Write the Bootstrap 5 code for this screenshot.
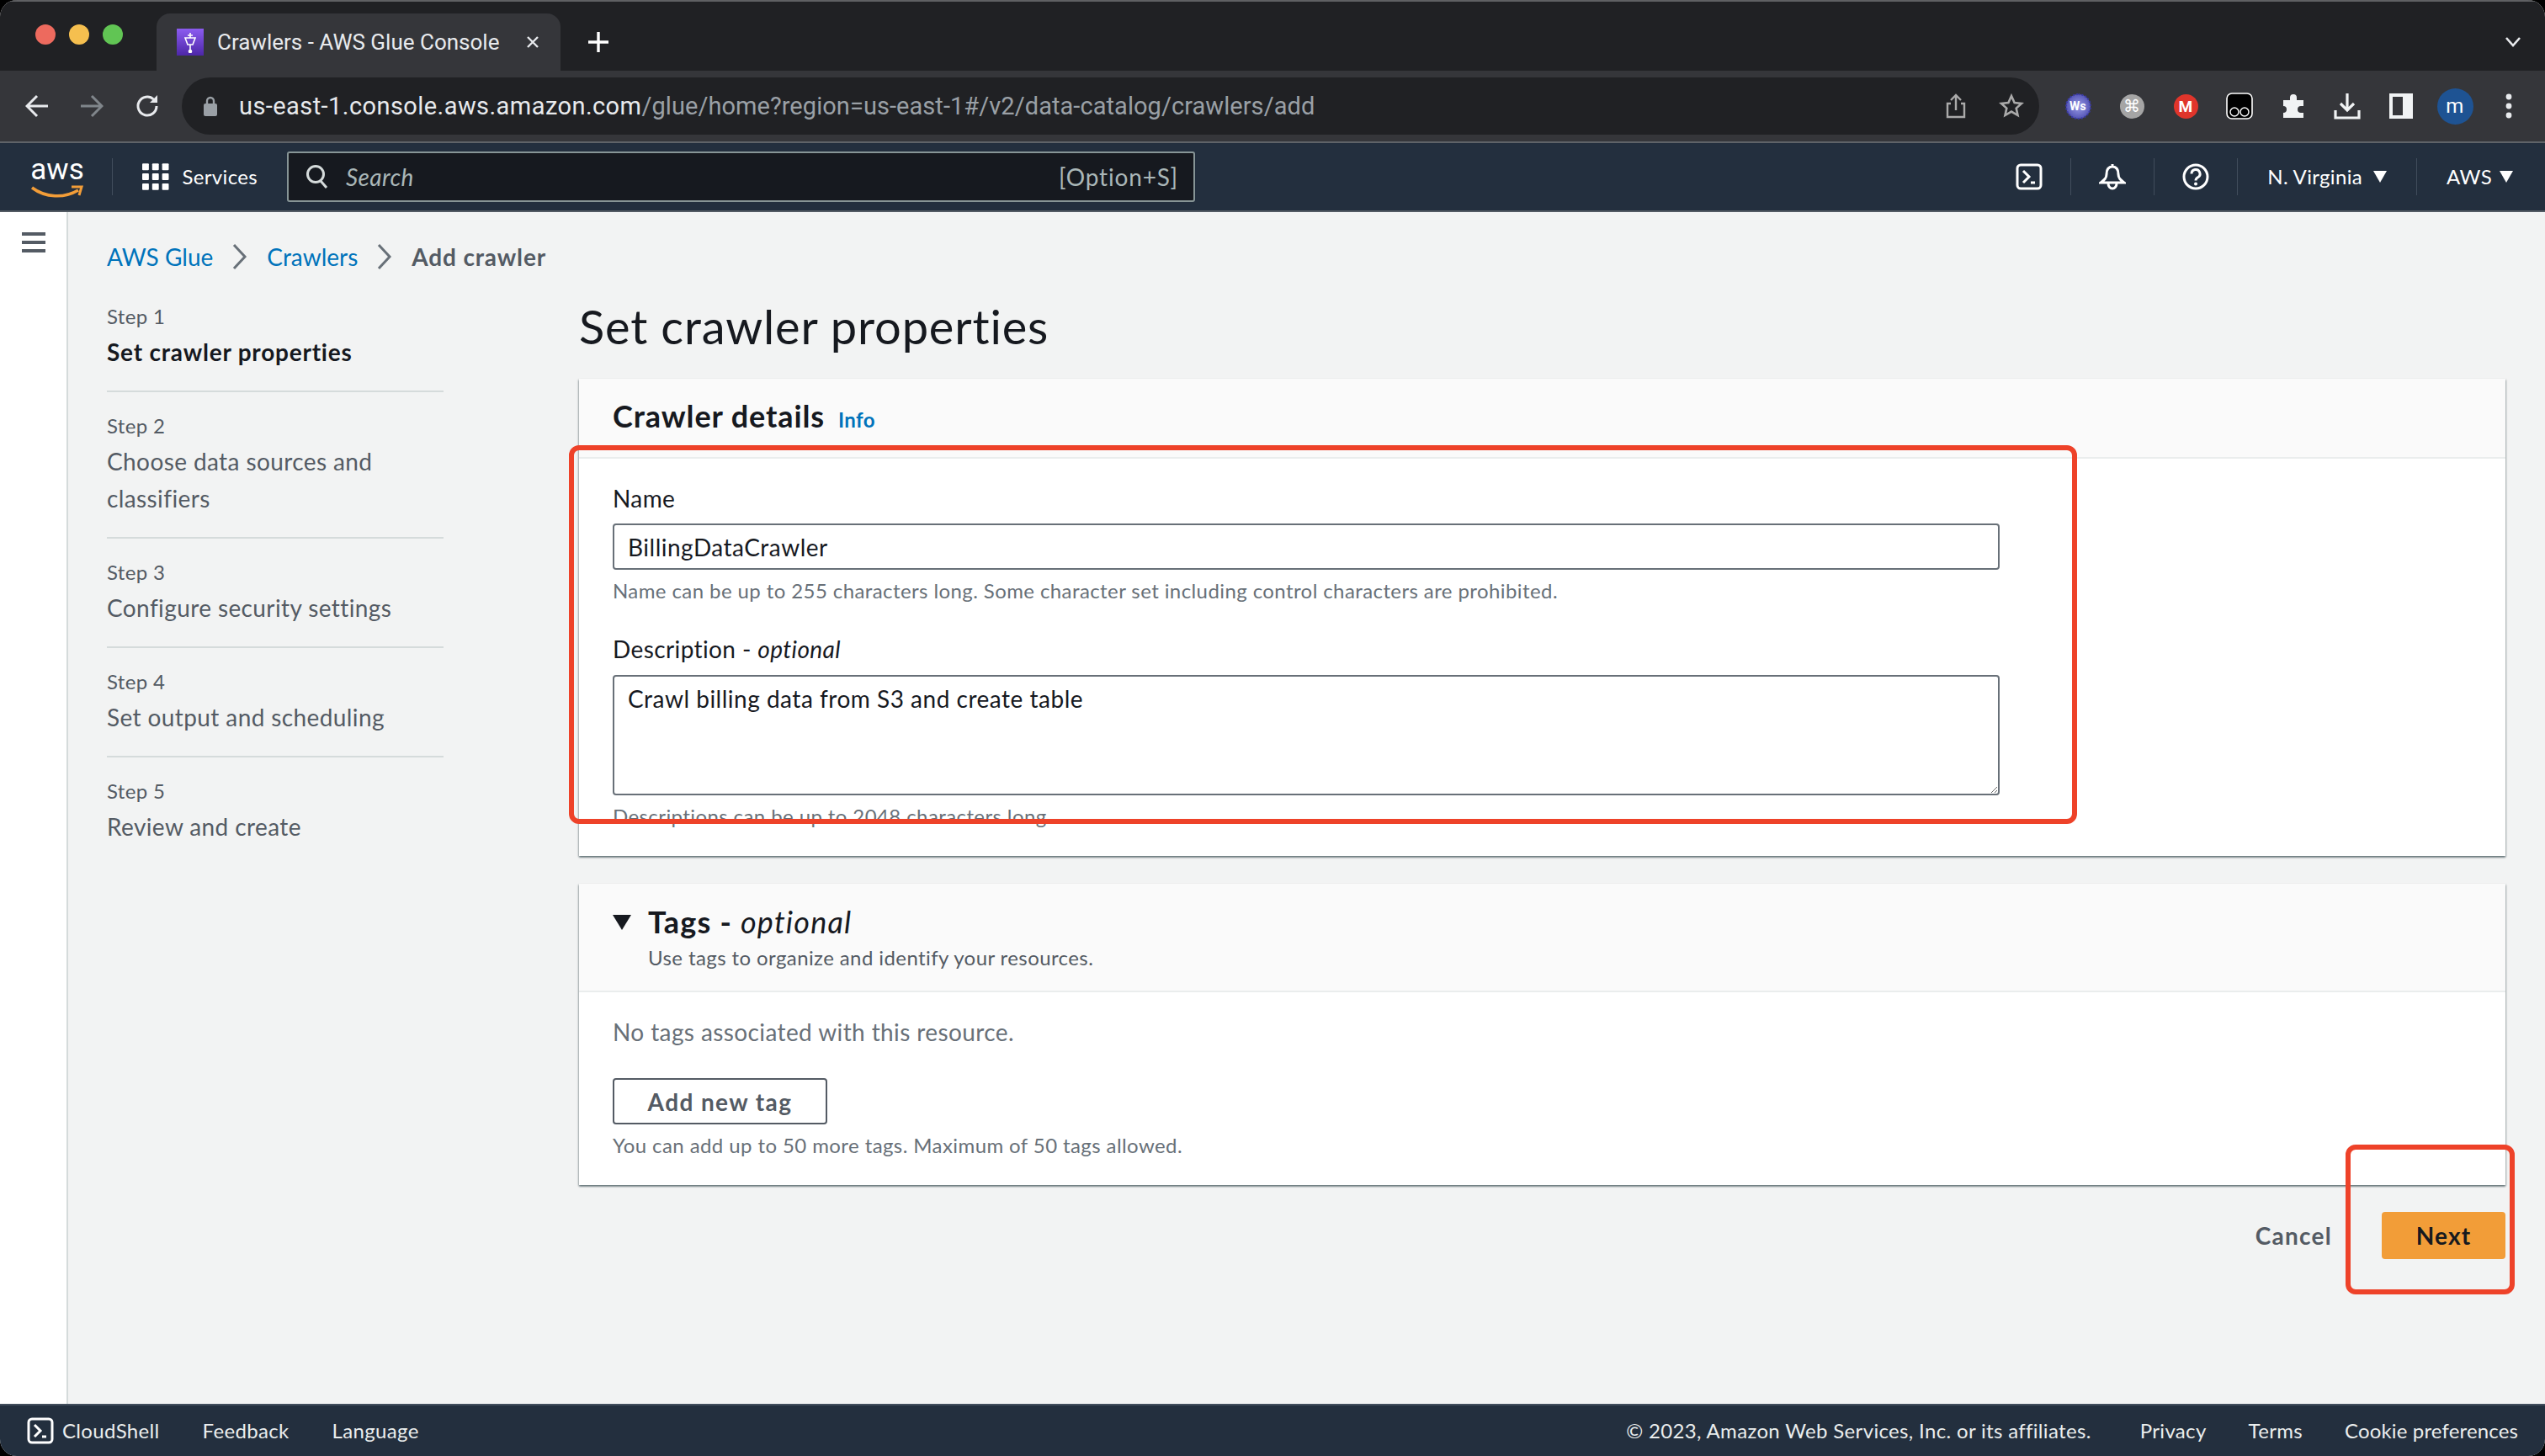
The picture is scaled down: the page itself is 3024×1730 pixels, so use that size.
<!doctype html>
<html lang="en">
<head>
    <meta charset="utf-8">
    <title>Crawlers - AWS Glue Console</title>
    <link href="https://cdn.jsdelivr.net/npm/bootstrap@5.3.3/dist/css/bootstrap.min.css" rel="stylesheet">
    <style>
        html, body { height: 100%; }
        body { background: #000; overflow: hidden; font-family: "Lato", "Liberation Sans", sans-serif; color: #16191f; }
        .app-window { position: relative; height: 1730px; border-radius: 20px; overflow: hidden; background: #f2f3f3; }
        .app-window * { letter-spacing: .014em; }

        .tab-strip { height: 84px; background: #202124; border-top: 2px solid #5f6063; padding-left: 42px; }
        .traffic { width: 24px; height: 24px; border-radius: 50%; }
        .traffic-red { background: #ed6a5e; }
        .traffic-yellow { background: #f5bf4f; }
        .traffic-green { background: #61c554; }
        .browser-tab { width: 480px; height: 68px; margin-left: 40px; margin-top: 14px; padding: 0 24px; background: #35363a; border-radius: 16px 16px 0 0; color: #e8eaed; font: 26px "Roboto", sans-serif; }
        .app-window .browser-tab span { letter-spacing: 0; }
        .tab-icon { width: 32px; height: 32px; background: linear-gradient(#8c5cf0, #4d27a8); }
        .tab-plus { margin-left: 32px; margin-top: 14px; }
        .tab-chevron { margin-right: 28px; margin-top: 14px; }

        .tool-bar { height: 86px; background: #35363a; border-bottom: 2px solid #5f6368; padding-left: 30px; }
        .nav-arrows { gap: 37px; width: 186px; flex: none; }
        .omni-box { width: 2207px; flex: none; height: 68px; background: #202124; border-radius: 34px; padding: 0 18px 0 26px; font: 29px "Roboto", sans-serif; color: #9aa0a6; }
        .app-window .omni-box span { letter-spacing: .002em; }
        .app-window .omni-box .omni-host { color: #e8eaed; letter-spacing: .015em; }
        .omni-url { margin-left: 26px; }
        .share-icon { margin-right: 39px; }
        .ext-row { margin-left: 14px; flex: none; }
        .ext-slot { width: 64px; height: 64px; }
        .ext-round { width: 29px; height: 29px; border-radius: 50%; font: bold 14px "Roboto", sans-serif; color: #fff; }
        .ext-ws { background: radial-gradient(#9a9ce6, #3a3aa4); outline: 2px dotted #3a3aa4; outline-offset: -1px; }
        .ext-cmd { background: #a5a5a5; font-size: 20px; font-weight: 400; }
        .ext-mega { background: #e0352b; font-size: 19px; }
        .ext-user { width: 43px; height: 43px; border-radius: 50%; background: #1e5393; color: #fff; font: 24px "Roboto", sans-serif; }

        .aws-bar { height: 82px; background: #232f3e; border-bottom: 2px solid #545b64; color: #fff; font-size: 24px; padding: 0 38px 0 36px; }
        .aws-logo { width: 64px; margin-right: 33px; padding-top: 2px; }
        .aws-word { display: block; font: 35px/36px "Roboto", sans-serif; text-align: center; }
        .app-window .aws-word { letter-spacing: 0; }
        .bar-divider { width: 1px; height: 44px; background: #414d5c; }
        .services-link { margin-left: 35px; gap: 16px; width: 137px; flex: none; }
        .search-box { width: 1079px; height: 60px; margin-left: 35px; background: #16191f; border: 2px solid #879596; border-radius: 3px; padding: 0 18px 0 20px; color: #aab7b8; font-size: 28px; }
        .search-box em { margin-left: 20px; }
        .app-window .search-box span { letter-spacing: .03em; }
        .bar-icon { width: 98px; }
        .region-text { padding-left: 35px; gap: 13px; }
        .region-first { padding-right: 35px; }
        .region-last { gap: 9px; }

        .side-strip { width: 81px; background: #fff; border-right: 2px solid #d5dbdb; padding: 24px 0 0 26px; }
        .page-main { padding: 0 47px 0 46px; min-width: 0; }
        .crumbs { padding-top: 33px; margin-bottom: 11px; font-size: 28px; line-height: 40px; gap: 22px; }
        .app-window .crumb-link { letter-spacing: 0; }
        .crumb-link, .info-link { color: #0073bb; text-decoration: none; }
        .app-window .crumb-here { color: #545b64; font-weight: 700; letter-spacing: .03em; }

        .step-rail { width: 561px; flex: none; }
        .step-item { width: 400px; padding: 20px 0 24px; border-bottom: 2px solid #d5dbdb; font-size: 28px; line-height: 44px; color: #545b64; }
        .step-item:last-child { border-bottom: 0; }
        .step-num { display: block; font-size: 24px; line-height: 40px; color: #545b64; }
        .app-window .step-active .step-title { color: #16191f; font-weight: 700; letter-spacing: .028em; }

        .app-window .page-title { padding-top: 16px; margin-bottom: 26px; font-size: 56px; line-height: 72px; font-weight: 400; letter-spacing: .015em; }
        .form-col { min-width: 0; }
        .aws-card { border: 0; border-radius: 0; background: #fff; margin-bottom: 33px; box-shadow: 0 2px 2px rgba(0,28,36,.4), 1px 1px 2px rgba(0,28,36,.2), -1px 1px 2px rgba(0,28,36,.2); }
        .aws-card .card-header { background: #fafafa; border-radius: 0; border-bottom: 2px solid #eaeded; padding: 20px 40px 0; }
        .head-details { height: 95px; }
        .app-window .head-details h2 { font-size: 36px; line-height: 48px; font-weight: 700; margin: 0; letter-spacing: .025em; }
        .info-link { font-size: 24px; font-weight: 700; margin-left: 16px; }
        .aws-card .head-tags { height: 129px; padding-top: 21px; }
        .app-window .head-tags h2 { font-size: 36px; line-height: 48px; font-weight: 700; margin: 0; letter-spacing: .033em; }
        .app-window .head-tags h2 em { font-weight: 400; letter-spacing: .033em; }
        .app-window .head-tags .tag-sub { font-size: 24px; line-height: 36px; color: #545b64; margin-top: 1px; letter-spacing: .017em; }
        .caret-down { margin-right: 20px; margin-top: 16px; }
        .aws-card .card-body { padding: 27px 40px 31px; }
        .field-label { display: block; font-size: 28px; line-height: 40px; margin: 0 0 10px; }
        .field-wrap { width: 1648px; }
        .app-window .aws-input { height: 55px; padding: 0 16px; border: 2px solid #687078; border-radius: 4px; font-size: 28px; color: #16191f; letter-spacing: .018em; }
        .app-window textarea.aws-input { height: 143px; min-height: 143px; padding: 6px 16px; line-height: 40px; resize: vertical; }
        .app-window .field-hint { font-size: 24px; line-height: 32px; color: #687078; margin-top: 9px; letter-spacing: .017em; }
        .field-gap { margin-bottom: 33px; }
        .label-tight { margin-bottom: 11px; }
        .no-tags { font-size: 28px; line-height: 40px; color: #687078; margin-bottom: 35px; }
        .app-window .btn-add { width: 255px; height: 55px; padding: 0; border: 2px solid #545b64; border-radius: 4px; background: #fff; color: #545b64; font-size: 28px; font-weight: 700; letter-spacing: .05em; }
        .page-actions { margin-top: -1px; }
        .app-window .btn-cancel { font-size: 28px; font-weight: 700; color: #545b64; padding: 0; border: 0; margin-right: 59px; letter-spacing: .045em; }
        .app-window .btn-next { width: 147px; height: 56px; padding: 0; border: 0; border-radius: 4px; background: #f29d38; color: #16191f; font-size: 28px; font-weight: 700; letter-spacing: .04em; }

        .foot-bar { height: 62px; background: #232f3e; border-top: 2px solid #414d5c; color: #eaeded; font-size: 24px; padding: 0 32px; }
        .foot-left { gap: 51px; }
        .foot-right { gap: 50px; }
        .foot-shell { gap: 10px; }
        .foot-copy { margin-right: 8px; }
        .app-window .foot-cookie { letter-spacing: .006em; }

        .red-frame { position: absolute; border: 6px solid #ee4229; border-radius: 12px; pointer-events: none; }
        .frame-form { left: 676px; top: 529px; width: 1792px; height: 450px; }
        .frame-next { left: 2787px; top: 1360px; width: 201px; height: 178px; }
    </style>
</head>
<body>

<div class="app-window d-flex flex-column">

    <!-- browser tabs -->
    <div class="tab-strip d-flex flex-shrink-0">
        <div class="d-flex align-items-center gap-3 pb-1">
            <span class="traffic traffic-red"></span>
            <span class="traffic traffic-yellow"></span>
            <span class="traffic traffic-green"></span>
        </div>
        <div class="browser-tab d-flex align-items-center">
            <span class="tab-icon d-flex align-items-center justify-content-center flex-shrink-0">
                <svg width="18" height="26" viewBox="0 0 18 26" fill="none" stroke="#fff" stroke-width="1.6"><path d="M3 8h12l-3 8H6zM9 16v8M9 2v6M6 5h6"/><circle cx="9" cy="24" r="1.5" fill="#fff"/></svg>
            </span>
            <span class="ms-3 flex-grow-1 text-nowrap">Crawlers - AWS Glue Console</span>
            <svg width="18" height="18" viewBox="0 0 18 18" stroke="#e8eaed" stroke-width="2.4"><path d="M3 3l12 12M15 3L3 15"/></svg>
        </div>
        <svg class="tab-plus align-self-center" width="26" height="26" viewBox="0 0 26 26" stroke="#fff" stroke-width="3.4"><path d="M13 1v24M1 13h24"/></svg>
        <svg class="tab-chevron ms-auto align-self-center" width="20" height="14" viewBox="0 0 20 14" fill="none" stroke="#e8eaed" stroke-width="2.6"><path d="M2 2l8 9 8-9"/></svg>
    </div>

    <!-- browser toolbar -->
    <div class="tool-bar d-flex align-items-center flex-shrink-0">
        <div class="nav-arrows d-flex align-items-center">
            <svg width="28" height="30" viewBox="0 0 28 30" fill="none" stroke="#e8eaed" stroke-width="3"><path d="M27 15H3M14 3L2 15l12 12"/></svg>
            <svg width="28" height="30" viewBox="0 0 28 30" fill="none" stroke="#80868b" stroke-width="3"><path d="M1 15h24M14 3l12 12-12 12"/></svg>
            <svg width="30" height="30" viewBox="0 0 30 30" fill="none" stroke="#e8eaed" stroke-width="3"><path d="M26 15a11 11 0 1 1-3.5-8"/><path d="M27 2v9h-9" fill="#e8eaed" stroke="none"/></svg>
        </div>
        <div class="omni-box d-flex align-items-center">
            <svg width="16" height="24" viewBox="0 0 16 24" fill="#9aa0a6"><rect y="9" width="16" height="15" rx="2"/><path d="M4 10V6a4 4 0 0 1 8 0v4" fill="none" stroke="#9aa0a6" stroke-width="2.4"/></svg>
            <span class="omni-url flex-grow-1 text-nowrap"><span class="omni-host">us-east-1.console.aws.amazon.com</span>/glue/home?region=us-east-1#/v2/data-catalog/crawlers/add</span>
            <svg class="share-icon" width="24" height="30" viewBox="0 0 24 30" fill="none" stroke="#aaa" stroke-width="2.4"><path d="M6 12H2v16h20V12h-4M12 20V2M6 8l6-6 6 6"/></svg>
            <svg width="30" height="30" viewBox="0 0 30 30" fill="none" stroke="#aaa" stroke-width="2.6"><path d="M15 3l3.6 8 8.4.9-6.3 5.7 1.8 8.4-7.5-4.4L7.500 26l1.800-8.400L3 11.900l8.400-.9z"/></svg>
        </div>
        <div class="ext-row d-flex align-items-center">
            <span class="ext-slot d-flex align-items-center justify-content-center"><span class="ext-round ext-ws d-flex align-items-center justify-content-center">Ws</span></span>
            <span class="ext-slot d-flex align-items-center justify-content-center"><span class="ext-round ext-cmd d-flex align-items-center justify-content-center">⌘</span></span>
            <span class="ext-slot d-flex align-items-center justify-content-center"><span class="ext-round ext-mega d-flex align-items-center justify-content-center">M</span></span>
            <span class="ext-slot d-flex align-items-center justify-content-center">
                <svg width="32" height="32" viewBox="0 0 32 32"><rect x="1" y="1" width="30" height="30" rx="6" fill="#000" stroke="#fff" stroke-width="1.6"/><circle cx="10" cy="23" r="5" fill="none" stroke="#fff" stroke-width="1.4"/><circle cx="22" cy="23" r="5" fill="none" stroke="#fff" stroke-width="1.4"/></svg>
            </span>
            <span class="ext-slot d-flex align-items-center justify-content-center">
                <svg width="30" height="30" viewBox="0 0 30 30" fill="#f1f3f4"><path d="M11 5a4 4 0 0 1 8 0v3h8v7h-3a4 4 0 0 0 0 8h3v6H3v-6a4 4 0 0 0 0-8V8h8z"/></svg>
            </span>
            <span class="ext-slot d-flex align-items-center justify-content-center">
                <svg width="32" height="32" viewBox="0 0 32 32" fill="none" stroke="#f1f3f4" stroke-width="3.200"><path d="M16 1v20M8 13l8 8 8-8M2 21v9h28v-9"/></svg>
            </span>
            <span class="ext-slot d-flex align-items-center justify-content-center">
                <svg width="28" height="30" viewBox="0 0 28 30"><path fill="#f1f3f4" fill-rule="evenodd" d="M0 0h28v30H0zM4 4v22h12V4z"/></svg>
            </span>
            <span class="ext-slot d-flex align-items-center justify-content-center"><span class="ext-user d-flex align-items-center justify-content-center">m</span></span>
            <span class="ext-slot d-flex align-items-center justify-content-center">
                <svg width="8" height="30" viewBox="0 0 8 30" fill="#e8eaed"><circle cx="4" cy="4" r="3.400"/><circle cx="4" cy="15" r="3.400"/><circle cx="4" cy="26" r="3.400"/></svg>
            </span>
        </div>
    </div>

    <!-- aws console header -->
    <div class="aws-bar d-flex align-items-center flex-shrink-0">
        <div class="aws-logo flex-shrink-0">
            <span class="aws-word">aws</span>
            <svg class="d-block" width="64" height="18" viewBox="0 0 64 18" fill="none" stroke="#f29d38" stroke-width="3.600"><path d="M2 3c16 12 38 13 55 3"/><path d="M49 2l12 0-3 10" stroke-width="3"/></svg>
        </div>
        <span class="bar-divider"></span>
        <div class="services-link d-flex align-items-center">
            <svg width="32" height="32" viewBox="0 0 32 32" fill="#fff"><rect width="8" height="8" rx="1"/><rect x="12" width="8" height="8" rx="1"/><rect x="24" width="8" height="8" rx="1"/><rect y="12" width="8" height="8" rx="1"/><rect x="12" y="12" width="8" height="8" rx="1"/><rect x="24" y="12" width="8" height="8" rx="1"/><rect y="24" width="8" height="8" rx="1"/><rect x="12" y="24" width="8" height="8" rx="1"/><rect x="24" y="24" width="8" height="8" rx="1"/></svg>
            <span>Services</span>
        </div>
        <div class="search-box d-flex align-items-center">
            <svg width="28" height="30" viewBox="0 0 28 30" fill="none" stroke="#d5dbdb" stroke-width="3"><circle cx="12" cy="12" r="9.500"/><path d="M18 20l7 8"/></svg>
            <em class="flex-grow-1">Search</em>
            <span>[Option+S]</span>
        </div>
        <div class="ms-auto d-flex align-items-center">
            <span class="bar-icon d-flex justify-content-center">
                <svg width="32" height="32" viewBox="0 0 32 32" fill="none" stroke="#fff" stroke-width="3"><rect x="2" y="2" width="28" height="28" rx="4"/><path d="M9 9l7 7-7 7M18 23h5"/></svg>
            </span>
            <span class="bar-divider"></span>
            <span class="bar-icon d-flex justify-content-center">
                <svg width="32" height="34" viewBox="0 0 32 34" fill="none" stroke="#fff" stroke-width="3"><path d="M16 2v3M16 5c-5 0-7 4-7 9 0 5-3 7-7 10h28c-4-3-7-5-7-10 0-5-2-9-7-9zM11 25a5 6 0 0 0 10 0"/></svg>
            </span>
            <span class="bar-divider"></span>
            <span class="bar-icon d-flex justify-content-center">
                <svg width="32" height="32" viewBox="0 0 32 32" fill="none" stroke="#fff" stroke-width="3"><circle cx="16" cy="16" r="14"/><path d="M11 12.500a5 5 0 1 1 7.500 4.300c-1.700 1-2.500 1.700-2.500 3.700"/><circle cx="16" cy="24.500" r="1" fill="#fff" stroke-width="2"/></svg>
            </span>
            <span class="bar-divider"></span>
            <span class="region-text region-first d-flex align-items-center">N. Virginia
                <svg width="16" height="14" viewBox="0 0 16 14" fill="#fff"><path d="M0 0h16L8 14z"/></svg>
            </span>
            <span class="bar-divider"></span>
            <span class="region-text region-last d-flex align-items-center">AWS
                <svg width="16" height="14" viewBox="0 0 16 14" fill="#fff"><path d="M0 0h16L8 14z"/></svg>
            </span>
        </div>
    </div>

    <!-- console body -->
    <div class="d-flex flex-grow-1" style="min-height:0">
        <div class="side-strip flex-shrink-0">
            <svg class="d-block" width="28" height="24" viewBox="0 0 28 24" fill="#545b64"><rect width="28" height="4"/><rect y="10" width="28" height="4"/><rect y="20" width="28" height="4"/></svg>
        </div>
        <div class="page-main flex-grow-1">
            <div class="crumbs d-flex align-items-center">
                <a class="crumb-link" href="#">AWS Glue</a>
                <svg width="20" height="34" viewBox="0 0 20 34" fill="none" stroke="#687078" stroke-width="3"><path d="M3 3l13 14L3 31"/></svg>
                <a class="crumb-link" href="#">Crawlers</a>
                <svg width="20" height="34" viewBox="0 0 20 34" fill="none" stroke="#687078" stroke-width="3"><path d="M3 3l13 14L3 31"/></svg>
                <span class="crumb-here">Add crawler</span>
            </div>
            <div class="d-flex">
                <div class="step-rail">
                    <div class="step-item step-active"><span class="step-num">Step 1</span><span class="step-title">Set crawler properties</span></div>
                    <div class="step-item"><span class="step-num">Step 2</span><span class="step-title">Choose data sources and<br>classifiers</span></div>
                    <div class="step-item"><span class="step-num">Step 3</span><span class="step-title">Configure security settings</span></div>
                    <div class="step-item"><span class="step-num">Step 4</span><span class="step-title">Set output and scheduling</span></div>
                    <div class="step-item"><span class="step-num">Step 5</span><span class="step-title">Review and create</span></div>
                </div>
                <div class="form-col flex-grow-1">
                    <h1 class="page-title">Set crawler properties</h1>

                    <div class="card aws-card">
                        <div class="card-header head-details d-flex align-items-baseline">
                            <h2>Crawler details</h2>
                            <a class="info-link" href="#">Info</a>
                        </div>
                        <div class="card-body">
                            <div class="field-wrap">
                                <label class="field-label" for="crawlerName">Name</label>
                                <input id="crawlerName" class="form-control aws-input" value="BillingDataCrawler">
                                <div class="field-hint field-gap">Name can be up to 255 characters long. Some character set including control characters are prohibited.</div>
                                <label class="field-label label-tight" for="crawlerDesc">Description - <em>optional</em></label>
                                <textarea id="crawlerDesc" class="form-control aws-input">Crawl billing data from S3 and create table</textarea>
                                <div class="field-hint">Descriptions can be up to 2048 characters long.</div>
                            </div>
                        </div>
                    </div>

                    <div class="card aws-card">
                        <div class="card-header head-tags d-flex">
                            <svg class="caret-down flex-shrink-0" width="22" height="18" viewBox="0 0 22 18" fill="#16191f"><path d="M0 0h22L11 18z"/></svg>
                            <div>
                                <h2>Tags - <em>optional</em></h2>
                                <div class="tag-sub">Use tags to organize and identify your resources.</div>
                            </div>
                        </div>
                        <div class="card-body">
                            <div class="no-tags">No tags associated with this resource.</div>
                            <button class="btn btn-add" type="button">Add new tag</button>
                            <div class="field-hint">You can add up to 50 more tags. Maximum of 50 tags allowed.</div>
                        </div>
                    </div>

                    <div class="page-actions d-flex justify-content-end align-items-center">
                        <button class="btn btn-cancel" type="button">Cancel</button>
                        <button class="btn btn-next" type="button">Next</button>
                    </div>
                </div>
            </div>
        </div>
    </div>

    <!-- console footer -->
    <div class="foot-bar d-flex align-items-center justify-content-between flex-shrink-0">
        <div class="foot-left d-flex align-items-center">
            <span class="foot-shell d-flex align-items-center">
                <svg width="32" height="32" viewBox="0 0 32 32" fill="none" stroke="#fff" stroke-width="3"><rect x="2" y="2" width="28" height="28" rx="4"/><path d="M9 9l7 7-7 7M18 23h5"/></svg>
                CloudShell
            </span>
            <span>Feedback</span>
            <span>Language</span>
        </div>
        <div class="foot-right d-flex align-items-center">
            <span class="foot-copy">© 2023, Amazon Web Services, Inc. or its affiliates.</span>
            <span>Privacy</span>
            <span>Terms</span>
            <span class="foot-cookie">Cookie preferences</span>
        </div>
    </div>

    <!-- annotation frames drawn over the screenshot -->
    <div class="red-frame frame-form"></div>
    <div class="red-frame frame-next"></div>
</div>

<script src="https://cdn.jsdelivr.net/npm/bootstrap@5.3.3/dist/js/bootstrap.bundle.min.js"></script>
</body>
</html>
